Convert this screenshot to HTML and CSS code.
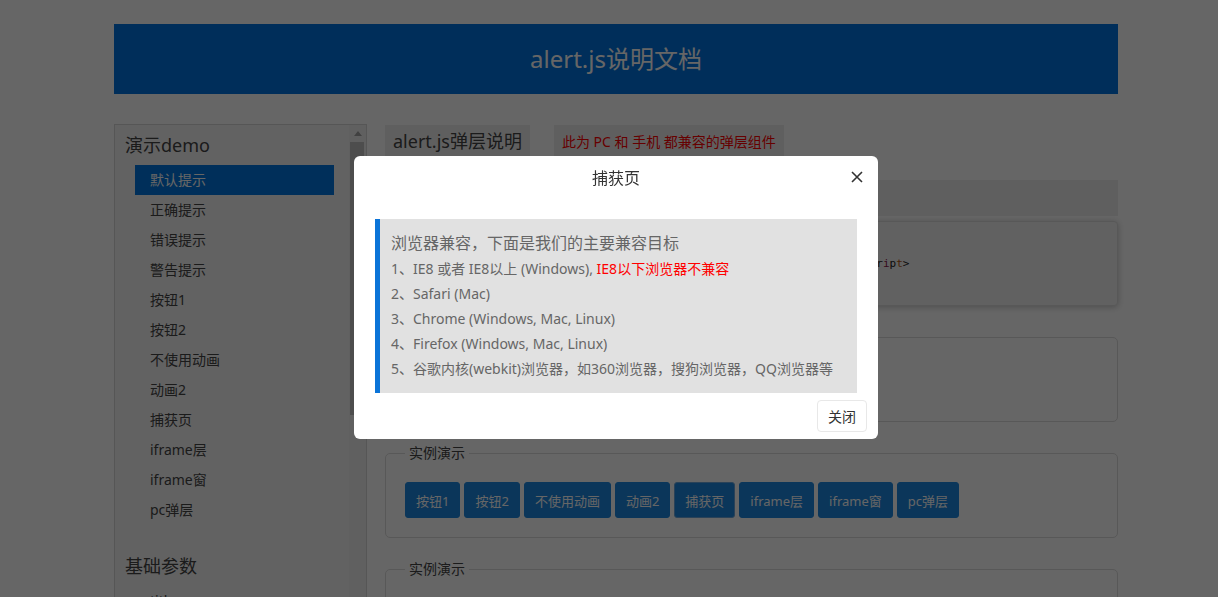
FILE: index.html
```html
<!DOCTYPE html>
<html lang="zh-CN">
<head>
<meta charset="utf-8">
<title>alert.js说明文档</title>
<link rel="stylesheet" href="styles.css">
</head>
<body>
<div class="page">
  <header class="banner"><h1>alert.js说明文档</h1></header>
  <div class="layout">
    <aside class="sidebar">
      <div class="side-inner">
        <h2 class="side-title">演示demo</h2>
        <ul class="side-list">
          <li class="active">默认提示</li>
          <li>正确提示</li>
          <li>错误提示</li>
          <li>警告提示</li>
          <li>按钮1</li>
          <li>按钮2</li>
          <li>不使用动画</li>
          <li>动画2</li>
          <li>捕获页</li>
          <li>iframe层</li>
          <li>iframe窗</li>
          <li>pc弹层</li>
        </ul>
        <h2 class="side-title">基础参数</h2>
        <ul class="side-list">
          <li>title</li>
          <li>content</li>
          <li>type</li>
          <li>btn</li>
        </ul>
      </div>
      <div class="scrollbar">
        <div class="scroll-btn">
          <svg width="8" height="5" viewBox="0 0 8 5"><path d="M0 5L4 0L8 5Z" fill="#a3a3a3"/></svg>
        </div>
        <div class="scroll-thumb"></div>
      </div>
    </aside>
    <main class="content">
      <div class="intro">
        <span class="intro-title">alert.js弹层说明</span>
        <span class="intro-note">此为 PC 和 手机 都兼容的弹层组件</span>
      </div>
      <div class="section-bar">引入方式</div>
      <pre class="code"><span class="tag">&lt;script</span> <span class="attr">type</span>=<span class="val">"text/javascript"</span> <span class="attr">charset</span>=<span class="val">"utf-8"</span> <span class="attr">src</span>=<span class="val">"./js/alert.js"</span><span class="tag">&gt;&lt;/sc</span>r<span class="kw">i</span>p<span class="val">t</span><span class="tag">&gt;</span></pre>
      <fieldset class="demo">
        <legend>实例演示</legend>
        <div class="btns">
          <button class="btn">默认提示</button>
          <button class="btn">正确提示</button>
          <button class="btn">错误提示</button>
          <button class="btn">警告提示</button>
        </div>
      </fieldset>
      <fieldset class="demo">
        <legend>实例演示</legend>
        <div class="btns">
          <button class="btn">按钮1</button>
          <button class="btn">按钮2</button>
          <button class="btn">不使用动画</button>
          <button class="btn">动画2</button>
          <button class="btn focus">捕获页</button>
          <button class="btn">iframe层</button>
          <button class="btn">iframe窗</button>
          <button class="btn">pc弹层</button>
        </div>
      </fieldset>
      <fieldset class="demo">
        <legend>实例演示</legend>
        <div class="btns">
          <button class="btn">title</button>
        </div>
      </fieldset>
    </main>
  </div>
</div>

<div class="mask"></div>
<div class="dialog">
  <div class="dialog-head">
    捕获页
    <span class="dialog-close">
      <svg width="12" height="12" viewBox="0 0 12 12"><path d="M1 1L11 11M11 1L1 11" stroke="#333" stroke-width="1.6" fill="none"/></svg>
    </span>
  </div>
  <div class="dialog-body">
    <div class="quote">
      <div class="lead">浏览器兼容，下面是我们的主要兼容目标</div>
      <div>1、IE8 或者 IE8以上 (Windows), <span class="warn">IE8以下浏览器不兼容</span></div>
      <div>2、Safari (Mac)</div>
      <div>3、Chrome (Windows, Mac, Linux)</div>
      <div>4、Firefox (Windows, Mac, Linux)</div>
      <div>5、谷歌内核(webkit)浏览器，如360浏览器，搜狗浏览器，QQ浏览器等</div>
    </div>
  </div>
  <div class="dialog-foot">
    <button class="btn-close">关闭</button>
  </div>
</div>
</body>
</html>
```
FILE: styles.css
```css
* { box-sizing: border-box; }
html, body { margin: 0; height: 100%; overflow: hidden; }
body {
  font-family: "Noto Sans", "Noto Sans CJK SC", sans-serif;
  background: #fff;
  color: #444;
}
.page { width: 1004px; margin: 24px 0 0 114px; }

.banner {
  height: 70px;
  background: #0073e0;
  display: flex;
  align-items: center;
  justify-content: center;
}
.banner h1 { margin: 0; font-size: 24px; font-weight: normal; color: #fff; line-height: 1; }

.layout { display: flex; gap: 18px; align-items: flex-start; margin-top: 30px; }

.sidebar {
  width: 253px;
  flex: none;
  height: 520px;
  display: flex;
  overflow: hidden;
  border: 1px solid #d8d8d8;
  background: #f5f5f5;
}
.side-inner { flex: 1; min-width: 0; padding: 5px 15px 0 10px; }
.scrollbar {
  width: 17px;
  flex: none;
  background: #f1f1f1;
  display: flex;
  flex-direction: column;
}
.scroll-btn {
  height: 17px;
  display: flex;
  align-items: center;
  justify-content: center;
}
.scroll-thumb {
  height: 273px;
  margin: 0 2px 0 1px;
  background: #c1c1c1;
}
.side-title { margin: 0; font-size: 18px; font-weight: normal; line-height: 30px; color: #444; }
.side-list { list-style: none; margin: 5px 0 26px 10px; padding: 0; }
.side-list li { height: 30px; line-height: 30px; padding-left: 15px; font-size: 14px; color: #444; white-space: nowrap; }
.side-list li.active { background: #0077e0; color: #fff; }

.content { flex: 1; min-width: 0; }
.intro { display: flex; gap: 24px; height: 32px; margin: 1px 0 23px; }
.intro-title { background: #eee; padding: 0 8px; font-size: 18px; line-height: 32px; color: #444; }
.intro-note { background: #eee; padding: 0 8px; font-size: 14px; line-height: 34px; color: #f00; }

.section-bar {
  height: 36px;
  background: #eee;
  margin-bottom: 5px;
  line-height: 36px;
  padding-left: 12px;
  font-size: 16px;
  color: #444;
}
.code {
  margin: 0;
  height: 85px;
  background: #f3f3f3;
  border: 1px solid #ddd;
  border-radius: 4px;
  box-shadow: 0 1px 6px rgba(0, 0, 0, 0.25);
  font: 11px/83px "DejaVu Sans Mono", monospace;
  padding: 0 20px;
  white-space: pre;
  overflow: hidden;
  color: #222;
}
.code .tag { color: #222; }
.code .attr { color: #7a2a8a; }
.code .val { color: #b4570a; }
.code .kw { color: #8a1a4a; }

.demo {
  margin: 21px 0 0;
  border: 1px solid #dcdcdc;
  border-radius: 5px;
  padding: 19px;
  min-width: 0;
}
.demo legend { padding: 0 4px; font-size: 14px; line-height: 20px; color: #444; }
.btns { display: flex; gap: 4px; }
.btn {
  height: 36px;
  padding: 0 10px;
  border: 1px solid #1c87e0;
  background: #1c87e0;
  color: #fff;
  font-family: inherit;
  font-size: 13px;
  border-radius: 3px;
}
.btn.focus { border-color: #6aa6dc; }

.mask { position: fixed; inset: 0; background: rgba(0, 0, 0, 0.6); }
.dialog {
  position: fixed;
  left: 354px;
  top: 156px;
  width: 524px;
  background: #fff;
  border-radius: 6px;
}
.dialog-head {
  position: relative;
  height: 44px;
  line-height: 44px;
  text-align: center;
  font-size: 16px;
  color: #333;
}
.dialog-close { position: absolute; right: 15px; top: 15px; width: 12px; height: 12px; display: flex; }
.dialog-body { padding: 19px 21px 0; }
.quote {
  border-left: 5px solid #0b74d8;
  background: #e1e1e1;
  padding: 12px 10px 12px 11px;
  color: #666;
  font-size: 14px;
  line-height: 25px;
}
.quote .lead { font-size: 16px; }
.quote .warn { color: #f00; }
.dialog-foot { display: flex; justify-content: flex-end; padding: 7px 11px; }
.btn-close {
  height: 32px;
  padding: 0 10px;
  border: 1px solid #e8e8e8;
  border-radius: 4px;
  background: #fff;
  font-family: inherit;
  font-size: 14px;
  color: #333;
}
```
